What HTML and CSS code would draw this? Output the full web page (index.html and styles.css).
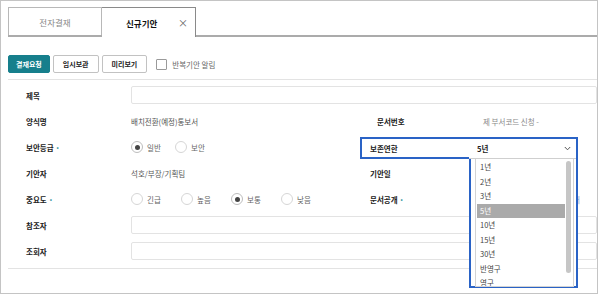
FILE: index.html
```html
<!DOCTYPE html>
<html>
<head>
    <title>신규기안</title>
    <link rel="stylesheet" href="styles.css">
</head>
<body>
    <div class="frame">
        <div class="tabs">
            <div class="tab">전자결재</div>
            <div class="tab active">신규기안<span class="tab-close">×</span></div>
        </div>

        <div class="toolbar">
            <button class="btn btn-primary">결재요청</button>
            <button class="btn">임시보관</button>
            <button class="btn">미리보기</button>
            <label class="check"><span class="check-box"></span>반복기안 알림</label>
        </div>

        <div class="form">
            <div class="form-label">제목</div>
            <div class="form-field span-3"><div class="input"></div></div>

            <div class="form-label">양식명</div>
            <div class="form-value">배치전환(예정)통보서</div>
            <div class="form-label label-side">문서번호</div>
            <div class="form-value value-side muted">제 부서코드 신청 -</div>

            <div class="form-label">보안등급 <span class="req">•</span></div>
            <div class="form-field">
                <div class="radios radios-sm">
                    <span class="radio checked"><span class="radio-dot"></span>일반</span>
                    <span class="radio"><span class="radio-dot"></span>보안</span>
                </div>
            </div>
            <div class="focus-box">
                <div class="focus-label">보존연한</div>
                <div class="select">
                    <span>5년</span>
                    <svg class="chevron" width="7" height="5" viewBox="0 0 7 5"><path d="M0.8 1 L3.5 3.8 L6.2 1" fill="none" stroke="#555" stroke-width="1"/></svg>
                </div>
                <div class="dropdown">
                    <div class="dropdown-list">
                        <div class="options">
                            <div class="option">1년</div>
                            <div class="option">2년</div>
                            <div class="option">3년</div>
                            <div class="option selected">5년</div>
                            <div class="option">10년</div>
                            <div class="option">15년</div>
                            <div class="option">30년</div>
                            <div class="option">반영구</div>
                            <div class="option">영구</div>
                        </div>
                        <div class="scroll"><div class="scroll-thumb"></div></div>
                    </div>
                </div>
            </div>

            <div class="form-label">기안자</div>
            <div class="form-value">석호/부장/기획팀</div>
            <div class="form-label">기안일</div>
            <div class="form-value"></div>

            <div class="form-label">중요도 <span class="req">•</span></div>
            <div class="form-field">
                <div class="radios">
                    <span class="radio"><span class="radio-dot"></span>긴급</span>
                    <span class="radio"><span class="radio-dot"></span>높음</span>
                    <span class="radio checked"><span class="radio-dot"></span>보통</span>
                    <span class="radio"><span class="radio-dot"></span>낮음</span>
                </div>
            </div>
            <div class="form-label">문서공개 <span class="req">•</span></div>
            <div class="form-value hidden-link">공개</div>

            <div class="form-label">참조자</div>
            <div class="form-field span-3"><div class="input"></div></div>

            <div class="form-label">조회자</div>
            <div class="form-field span-3"><div class="input"></div></div>
        </div>
    </div>
</body>
</html>
```

FILE: styles.css
```css
body {
    margin: 0;
    font-family: "Noto Sans CJK KR", "Noto Sans", sans-serif;
    background-color: white;
    color: #222;
}

.frame {
    box-sizing: border-box;
    width: 598px;
    height: 294px;
    border: 1px solid #c4c4c4;
    padding: 6px 0 0 7px;
    overflow: hidden;
}

/* tabs */
.tabs {
    display: flex;
    border-bottom: 2px solid #ababab;
}

.tab {
    box-sizing: border-box;
    width: 94px;
    height: 28px;
    display: flex;
    align-items: center;
    justify-content: center;
    border: 1px solid #b8b8b8;
    border-bottom: none;
    font-size: 8.5px;
    color: #888;
}

.tab.active {
    justify-content: flex-start;
    padding-left: 24px;
    padding-right: 7px;
    height: 30px;
    margin-bottom: -2px;
    border-color: #8a8a8a;
    border-left: none;
    background-color: white;
    font-weight: bold;
    color: #111;
}

.tab-close {
    margin-left: auto;
    font-weight: normal;
    font-size: 10px;
    color: #666;
}

/* toolbar */
.toolbar {
    display: flex;
    align-items: center;
    gap: 3px;
    margin-top: 18px;
    padding-bottom: 6px;
    border-bottom: 1px solid #e3e3e3;
}

.btn {
    height: 18px;
    padding: 0 9px;
    border: 1px solid #c2c2c2;
    border-radius: 2px;
    background-color: white;
    font-family: inherit;
    font-size: 7px;
    font-weight: bold;
    color: #222;
}

.btn-primary {
    padding: 0 7px;
    border-color: #167f8c;
    background-color: #167f8c;
    color: white;
}

.check {
    display: flex;
    align-items: center;
    gap: 5px;
    margin-left: 6px;
    font-size: 7.5px;
    color: #666;
}

.check-box {
    box-sizing: border-box;
    width: 11px;
    height: 11px;
    border: 1px solid #9a9a9a;
    border-radius: 1px;
}

/* form */
.form {
    display: grid;
    grid-template-columns: 105px 239px 106px 1fr;
    grid-auto-rows: 26px;
    padding: 2px 0 4px 18px;
    border-bottom: 1px solid #e3e3e3;
    font-size: 7.5px;
}

.form-label {
    display: flex;
    align-items: center;
    font-weight: bold;
    color: #222;
}

.form-value,
.form-field {
    display: flex;
    align-items: center;
    color: #555;
}

.label-side {
    padding-left: 7px;
}

.value-side {
    padding-left: 7px;
}

.muted {
    color: #8a8a8a;
}

.hidden-link {
    padding-left: 90px;
    color: #7f9fd8;
}

.span-3 {
    grid-column: 2 / 5;
}

.req {
    margin-left: 3px;
    font-size: 6px;
    color: #1e8e9a;
}

.input {
    flex: 1;
    height: 18px;
    box-sizing: border-box;
    border: 1px solid #e3e3e3;
    border-radius: 2px;
}

.radios {
    display: flex;
}

.radio {
    display: flex;
    align-items: center;
    gap: 4px;
    width: 50px;
    color: #666;
}

.radios-sm .radio {
    width: 44px;
}

.radio-dot {
    box-sizing: border-box;
    width: 12px;
    height: 12px;
    border: 1px solid #d6d6d6;
    border-radius: 50%;
    display: flex;
    align-items: center;
    justify-content: center;
}

.radio.checked .radio-dot {
    border-color: #bdbdbd;
}

.radio.checked .radio-dot::after {
    content: "";
    width: 5px;
    height: 5px;
    border-radius: 50%;
    background-color: #444;
}

/* 보존연한 focus */
.focus-box {
    grid-column: 3 / 5;
    align-self: end;
    position: relative;
    display: flex;
    width: 218px;
    height: 22px;
    box-sizing: border-box;
    margin-left: -10px;
    margin-bottom: 1px;
    border: 2px solid #2a63c6;
    border-bottom: none;
}

.focus-label {
    width: 107px;
    box-sizing: border-box;
    padding-left: 8px;
    display: flex;
    align-items: center;
    border-bottom: 2px solid #2a63c6;
    font-weight: bold;
}

.select {
    flex: 1;
    display: flex;
    align-items: center;
    justify-content: space-between;
    padding: 0 5px 0 8px;
    border-bottom: 1px solid #cfcfcf;
    font-weight: bold;
    color: #222;
}

.chevron {
    display: block;
}

.dropdown {
    position: absolute;
    top: 100%;
    left: 107px;
    right: -2px;
    height: 129px;
    box-sizing: border-box;
    padding: 0 2px 0 4px;
    border: 2px solid #2a63c6;
    border-top: none;
    background-color: white;
    z-index: 2;
}

.dropdown-list {
    display: flex;
    height: 100%;
    border: 1px solid #d3d3d3;
    border-top: none;
    overflow: hidden;
}

.options {
    flex: 1;
    padding: 1px 0 0 1px;
}

.option {
    height: 14.5px;
    line-height: 14.5px;
    padding-left: 3px;
    color: #444;
}

.option.selected {
    background-color: #aaaaaa;
    color: white;
}

.scroll {
    width: 8px;
    padding: 2px 0 0 1px;
    box-sizing: border-box;
}

.scroll-thumb {
    width: 5px;
    height: 112px;
    border-radius: 3px;
    background-color: #c6c6c6;
}
```
